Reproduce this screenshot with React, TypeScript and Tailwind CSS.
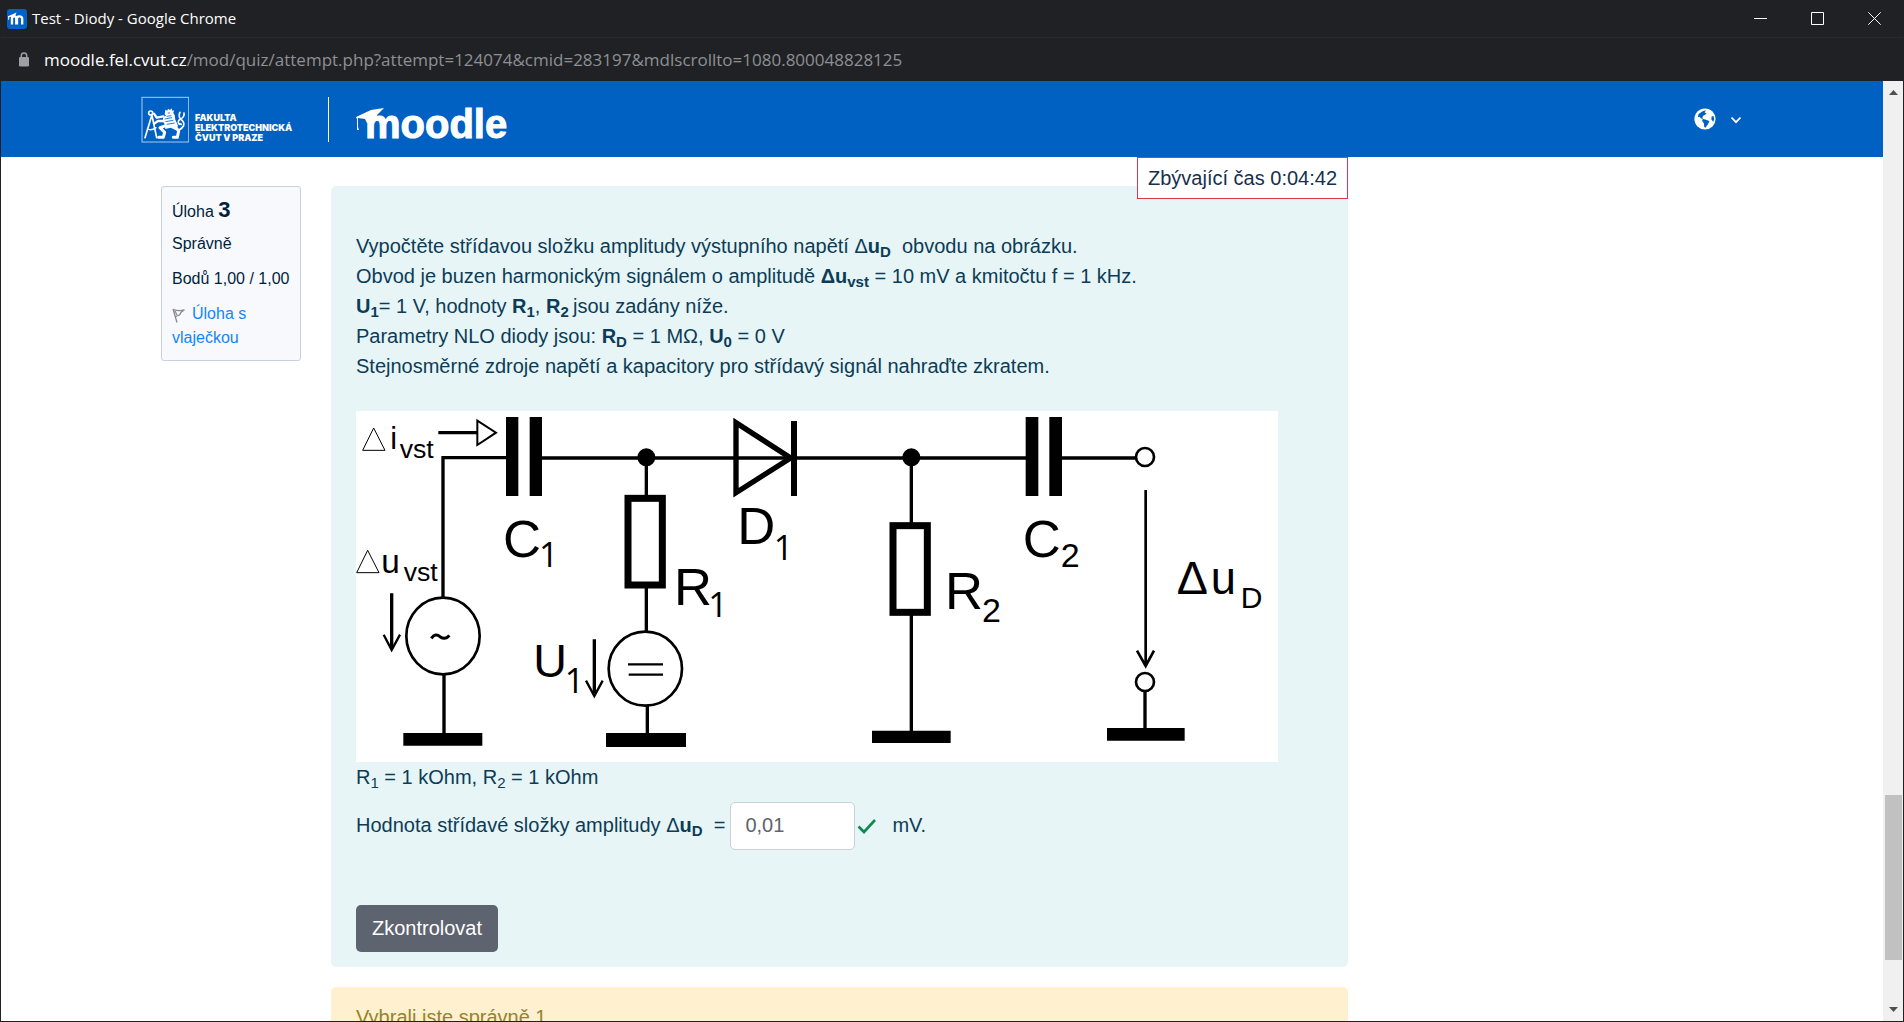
import type { ReactNode } from "react";

function Sub({ children }: { children: ReactNode }) {
  return <sub className="relative -bottom-1 align-baseline text-[15px] leading-none">{children}</sub>;
}

function TitleBar() {
  return (
    <div className="flex h-[38px] shrink-0 items-center justify-between border-b border-[#292a2d] pl-1.5 pr-[22px]">
      <div className="flex items-center gap-[5px]">
        <svg viewBox="0 0 20 20" className="size-5" aria-hidden="true">
          <rect width="20" height="20" rx="3" fill="#0062c4" />
          <path d="M5 15.5V9.5Q5 7.4 7.2 7.4Q9.2 7.4 9.2 9.6V15.5M10 15.5V9.6Q10 7.4 12.4 7.4Q15.2 7.4 15.2 9.9V15.5" fill="none" stroke="#fff" strokeWidth="2.3" />
          <path d="M1 7.2L9.5 3.6L8 7.5L2.4 8.1L2 11H1.4Z" fill="#fff" />
        </svg>
        <span className="font-['Open_Sans',sans-serif] text-[15px] text-white">Test - Diody - Google Chrome</span>
      </div>
      <div className="flex items-center gap-11 text-white">
        <button type="button" aria-label="Minimalizovat">
          <svg viewBox="0 0 13 13" className="size-[13px]"><path d="M0 6.5H13" stroke="currentColor" /></svg>
        </button>
        <button type="button" aria-label="Maximalizovat">
          <svg viewBox="0 0 13 13" className="size-[13px]"><path d="M.5 .5H12.5V12.5H.5Z" fill="none" stroke="currentColor" /></svg>
        </button>
        <button type="button" aria-label="Zavřít">
          <svg viewBox="0 0 13 13" className="size-[13px]"><path d="M.3 .3L12.7 12.7M12.7 .3L.3 12.7" stroke="currentColor" /></svg>
        </button>
      </div>
    </div>
  );
}

function AddressBar() {
  return (
    <div className="flex h-[43px] shrink-0 items-center gap-3.5 pl-[17px] font-['Open_Sans',sans-serif] text-[17px]">
      <svg viewBox="0 0 12 15" className="h-[15px] w-3" aria-hidden="true">
        <rect x="1" y="5" width="10" height="9.5" rx="1.2" fill="#9aa0a6" />
        <path d="M3.3 6V3.8a2.7 2.7 0 0 1 5.4 0V6" fill="none" stroke="#9aa0a6" strokeWidth="1.5" />
      </svg>
      <span className="text-[#8d9094]">
        <span className="text-white">moodle.fel.cvut.cz</span>/mod/quiz/attempt.php?attempt=124074&amp;cmid=283197&amp;mdlscrollto=1080.800048828125
      </span>
    </div>
  );
}

function Crest() {
  return (
    <svg viewBox="33 33 144 141" className="h-[47px] w-12" aria-hidden="true">
      <rect x="36" y="37" width="140" height="134" fill="none" stroke="#a9cbee" strokeWidth="3" />
      <g fill="none" stroke="#fff" strokeLinecap="round" strokeLinejoin="round">
        <path d="M65 92L45 158M66 92L80 158" strokeWidth="5" />
        <circle cx="62" cy="84" r="6" strokeWidth="5" />
        <path d="M52 132Q64 138 78 128" strokeWidth="4" />
        <path d="M72 86L80 98L100 94M72 116L84 108L102 108" strokeWidth="7" />
        <path d="M108 122L90 128L104 142L100 157H86M134 124L146 138L142 157H130" strokeWidth="9" />
        <path d="M146 136Q170 122 158 108Q150 102 148 96Q146 88 150 82M148 118Q140 108 152 102Q164 96 162 84M146 116L154 118" strokeWidth="5" />
      </g>
      <path d="M105 82L106 74L112 77L114 71L120 75L125 70L127 77L132 76L130 84L134 90L136 104L144 122L138 136L122 128L106 132L104 118L98 108L100 96L108 92L104 88Z" fill="#fff" />
      <path d="M110 94L124 92M104 102L126 98M106 110L130 106M110 118L134 114M113 84H120" stroke="#0062c4" strokeWidth="2.5" fill="none" />
    </svg>
  );
}

function SiteHeader() {
  return (
    <header className="flex h-[76px] shrink-0 items-center justify-between bg-[#0061c3] pr-[141px] pl-[140px]">
      <a href="#" className="flex items-center text-white" aria-label="Moodle FEL ČVUT">
        <Crest />
        <span className="mt-[18px] ml-1.5 flex w-[104px] flex-col font-['Inter',sans-serif] text-[9px] leading-[10px] font-black whitespace-nowrap">
          <span>FAKULTA</span>
          <span>ELEKTROTECHNICKÁ</span>
          <span>ČVUT V PRAZE</span>
        </span>
        <span className="ml-[29px] h-[45px] w-px bg-white" />
        <svg viewBox="0 0 156 46" className="ml-[26px] h-[46px] w-[156px] overflow-visible">
          <text x="10" y="42" fill="#fff" stroke="#fff" strokeWidth="1" fontFamily="Liberation Sans, sans-serif" fontWeight="700" fontSize="40">moodle</text>
          <path d="M1 21L16 14L29 12L22 19L24 24L12 27L10 23L3 22V31L4 34H2V23Z" fill="#fff" />
        </svg>
      </a>
      <button type="button" className="flex items-center gap-3.5 text-white" aria-label="Jazyk">
        <svg viewBox="0 0 22 22" className="size-[22px]">
          <circle cx="11" cy="11" r="10.6" fill="#fff" />
          <path d="M12 2.2L8.6 3.2L4.6 6L3.8 9.2L5.6 8.8L7 10.6L9 10.8L8.4 9.2L9.2 7.8L11.4 6.6L12.6 5.2L10.6 4.4ZM8.6 10.8L13.6 12.2L15.4 13.6L13.8 16.4L11.4 19.8L10.2 19L10 15.4L8.2 13ZM17.6 8.4L19.6 8L20.2 11.4L19.2 13.8L17.4 11.4Z" fill="#0061c3" />
        </svg>
        <svg viewBox="0 0 12 8" className="mt-0.5 h-2 w-3"><path d="M1.5 1.5L6 6.2L10.5 1.5" fill="none" stroke="#fff" strokeWidth="1.8" /></svg>
      </button>
    </header>
  );
}

function QuestionInfo() {
  return (
    <aside className="w-[140px] shrink-0 rounded-[3px] border border-[#c8d0da] bg-[#f8f9fc] px-2.5 pt-[11px] pb-2.5 text-[16px] leading-6 text-[#001f3c]">
      <h3 className="h-[30px]">
        Úloha <span className="text-[22px] font-bold">3</span>
      </h3>
      <div className="mt-1">Správně</div>
      <div className="mt-[11px] whitespace-nowrap">Bodů 1,00 / 1,00</div>
      <a href="#" className="mt-[11px] block text-[#1584fb]">
        <svg viewBox="0 0 14 15" className="mr-1.5 inline h-[15px] w-3.5 align-[-4px]" aria-hidden="true">
          <path d="M1 1L5 14.5M1.5 1.5Q6 3.5 12.5 2Q9 3.5 7.5 7L3.5 8.5M3 3L5 7" fill="none" stroke="#8a8a8a" strokeWidth="1.3" />
        </svg>
        Úloha s<br />vlaječkou
      </a>
    </aside>
  );
}

function Circuit() {
  return (
    <svg viewBox="18 33 2766 1053" className="block h-auto w-[922px] max-w-full bg-white" role="img" aria-label="Schéma obvodu">
      <g fill="none" stroke="#000" strokeWidth="10">
        <path d="M279 595V173H470M576 174H1156M1156 174H2028M2134 174H2358" />
        <path d="M282 820V1002M889 174V288M889 562V695M892 914V1002M1684 174V370M1684 645V994M2385 875V988" />
        <ellipse cx="279" cy="708" rx="110" ry="115" strokeWidth="8" />
        <ellipse cx="886" cy="806" rx="110" ry="111" strokeWidth="8" />
        <path d="M265 98H381M125 580V744M733 718V880" />
        <path d="M382 62V135L438 98Z" strokeWidth="6" />
        <path d="M101 704L125 750L150 704M708 842L733 888L758 842" strokeWidth="7" />
        <path d="M2387 270V796M2361 752L2387 798L2412 752" strokeWidth="8" />
        <path d="M834 793H939M836 824H939" strokeWidth="7" />
        <path d="M1158 68V278L1322 174Z" strokeWidth="16" />
        <rect x="834" y="295" width="103" height="260" strokeWidth="21" />
        <rect x="1629" y="377" width="103" height="260" strokeWidth="21" />
        <path d="M71 84L38 151H105ZM53 451L20 518H87Z" strokeWidth="3" />
        <path d="M244 715Q256 698 270 710Q286 721 298 706" strokeWidth="9" />
      </g>
      <g fill="#000">
        <path d="M468 51H505V288H468ZM539 51H576V288H539ZM2027 51H2065V288H2027ZM2098 51H2136V288H2098ZM1323 63H1341V288H1323Z" />
        <path d="M160 999H397V1037H160ZM768 999H1008V1041H768ZM1566 992H1802V1029H1566ZM2271 984H2504V1022H2271Z" />
        <circle cx="889" cy="172" r="27" />
        <circle cx="1684" cy="172" r="27" />
      </g>
      <g fill="#fff" stroke="#000" strokeWidth="8">
        <circle cx="2385" cy="171" r="27" />
        <circle cx="2385" cy="846" r="27" />
      </g>
      <g fontFamily="Liberation Sans, sans-serif" fontSize="158">
        <text x="459" y="471">C</text>
        <text x="1162" y="433">D</text>
        <text x="972" y="616">R</text>
        <text x="550" y="832" fontSize="140">U</text>
        <text x="2018" y="471">C</text>
        <text x="1785" y="628">R</text>
        <text x="2480" y="583" fontSize="140">Δ</text>
        <text x="2582" y="583" fontSize="136">u</text>
      </g>
      <g fontFamily="Open Sans, sans-serif" fontSize="102">
        <text x="567" y="501">1</text>
        <text x="1271" y="479">1</text>
        <text x="1075" y="650">1</text>
        <text x="644" y="879">1</text>
      </g>
      <g fontFamily="Liberation Sans, sans-serif" fontSize="102">
        <text x="2132" y="501">2</text>
        <text x="1896" y="665">2</text>
        <text x="2672" y="624" fontSize="90">D</text>
      </g>
      <g fontFamily="Liberation Sans, sans-serif" fontSize="92">
        <text x="121" y="148">i</text>
        <text x="94" y="518" fontSize="100">u</text>
        <text x="149" y="175" fontSize="80">vst</text>
        <text x="161" y="542" fontSize="80">vst</text>
      </g>
    </svg>
  );
}

function Question() {
  return (
    <section className="rounded-[5px] bg-[#e7f5f6] px-[25px] pt-[45px] pb-[15px] text-[20px] leading-[30px] text-[#0c3c57]">
      <p>Vypočtěte střídavou složku amplitudy výstupního napětí Δ<b>u<Sub>D</Sub></b>&nbsp; obvodu na obrázku.</p>
      <p>Obvod je buzen harmonickým signálem o amplitudě <b>Δu<Sub>vst</Sub></b> = 10 mV a kmitočtu f = 1 kHz.</p>
      <p><b>U<Sub>1</Sub></b>= 1 V, hodnoty <b>R<Sub>1</Sub></b>, <b>R<Sub>2</Sub></b><Sub> </Sub>jsou zadány níže.</p>
      <p>Parametry NLO diody jsou: <b>R<Sub>D</Sub></b> = 1 MΩ, <b>U<Sub>0</Sub></b> = 0 V</p>
      <p className="mb-[30px]">Stejnosměrné zdroje napětí a kapacitory pro střídavý signál nahraďte zkratem.</p>
      <Circuit />
      <p>R<Sub>1</Sub> = 1 kOhm, R<Sub>2</Sub> = 1 kOhm</p>
      <div className="mt-2.5 flex items-center">
        <label htmlFor="answer" className="pb-0.5">Hodnota střídavé složky amplitudy Δ<b>u<Sub>D</Sub></b>&nbsp; =</label>
        <input id="answer" type="text" defaultValue="0,01" className="ml-[5px] h-12 w-[125px] rounded-[5px] border border-[#c9d0d6] bg-white px-3.5 pb-0.5 text-[#5d636f]" />
        <svg viewBox="0 0 20 16" className="ml-0.5 h-4 w-5" role="img" aria-label="Správně">
          <path d="M1.5 8.5L7 14L18 2" fill="none" stroke="#0f8a50" strokeWidth="2.6" />
        </svg>
        <span className="ml-[15px] pb-0.5">mV.</span>
      </div>
      <button type="button" className="mt-[55px] block h-[47px] rounded-[5px] bg-[#5d636f] px-4 pb-0.5 text-white">Zkontrolovat</button>
    </section>
  );
}

function ScrollBar() {
  return (
    <div className="flex w-5 shrink-0 flex-col items-center bg-[#f0f0f0]">
      <svg viewBox="0 0 9 5" className="mt-[9px] h-[5px] w-[9px] shrink-0" aria-hidden="true"><path d="M0 5L4.5 0L9 5Z" fill="#505050" /></svg>
      <div className="grow-[700]" />
      <div className="w-[17px] grow-[165] bg-[#c1c1c1]" />
      <div className="grow-[47]" />
      <svg viewBox="0 0 9 5" className="mb-[9px] h-[5px] w-[9px] shrink-0" aria-hidden="true"><path d="M0 0L4.5 5L9 0Z" fill="#505050" /></svg>
    </div>
  );
}

export default function App() {
  return (
    <div className="flex h-screen flex-col overflow-hidden border-x border-b border-[#202124] bg-[#202124] font-['Liberation_Sans',Arial,sans-serif]">
      <TitleBar />
      <AddressBar />
      <div className="flex min-h-0 flex-1">
        <div className="flex min-w-0 flex-1 flex-col overflow-hidden bg-white">
          <SiteHeader />
          <main className="relative flex min-h-0 flex-1 items-start gap-[30px] pt-[29px] pr-[535px] pl-40">
            <div className="absolute top-0 right-[535px] border border-[#dc3550] bg-white px-2.5 py-[5px] text-[20px] leading-[30px] text-[#14304f]">
              Zbývající čas 0:04:42
            </div>
            <QuestionInfo />
            <div className="flex min-w-0 flex-1 flex-col gap-5">
              <Question />
              <section className="rounded-[5px] bg-[#fff0cf] px-[25px] py-[15px] text-[20px] leading-[30px] text-[#94832f]">
                Vybrali jste správně 1.
              </section>
            </div>
          </main>
        </div>
        <ScrollBar />
      </div>
    </div>
  );
}
